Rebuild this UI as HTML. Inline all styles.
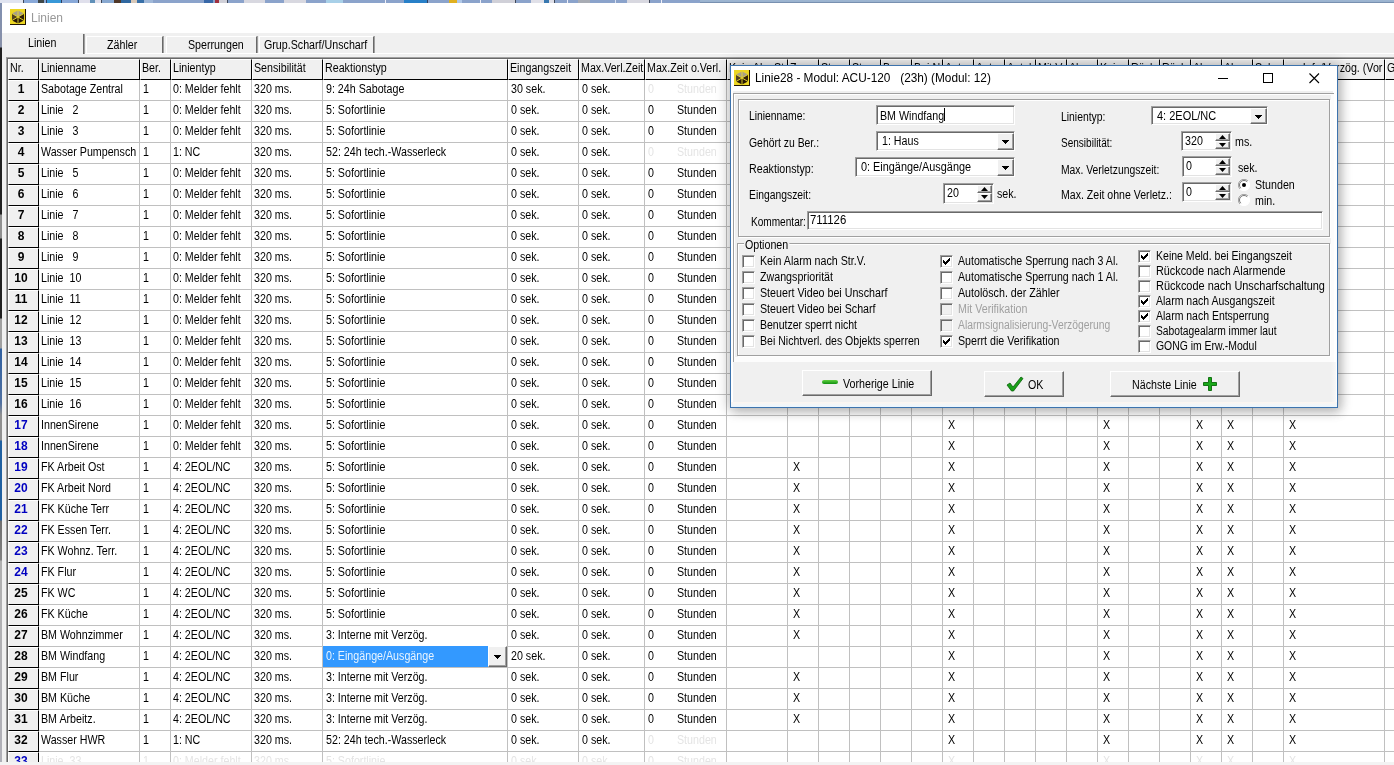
<!DOCTYPE html>
<html><head><meta charset="utf-8"><title>Linien</title>
<style>
*{box-sizing:border-box}
html,body{margin:0;padding:0}
body{width:1394px;height:765px;overflow:hidden;background:#fff;position:relative;font-family:"Liberation Sans",sans-serif;font-size:12px;color:#000}
.a{position:absolute;white-space:pre}
.t,.c,.l,.s{transform:scaleX(.89);transform-origin:0 50%}
.s{display:inline-block}
.t{position:absolute;white-space:pre;line-height:13px;height:13px}
#win{position:absolute;left:2px;top:3px;width:1392px;height:762px;background:#f0f0f0}
#title{position:absolute;left:0;top:0;width:1392px;height:30px;background:#fff}
#grid{position:absolute;left:7px;top:58px;width:1387px;height:707px;background:#fff;overflow:hidden}
.hc{position:absolute;top:1px;height:21px;background:#f0f0f0;border-right:1px solid #000;border-bottom:1px solid #000;border-left:1px solid #fff;border-top:1px solid #fff;overflow:hidden;white-space:pre;line-height:16px;padding-left:1px}
.nc{position:absolute;left:1px;width:31px;height:21px;background:#f0f0f0;border-right:1px solid #000;border-bottom:1px solid #000;border-left:1px solid #fff;border-top:1px solid #fff;text-align:center;font-weight:bold;font-size:12px;line-height:16px;padding-right:5px}
.nc.b{color:#0000c0}
.vl{position:absolute;width:1px;background:#c0c0c0;top:22px;bottom:0}
.hl{position:absolute;height:1px;background:#c0c0c0;left:32px;right:0}
.c{position:absolute;white-space:pre;line-height:13px;height:13px}
.g{color:#e4e4e4}
.x{position:absolute;width:9px;height:9px}
#root{position:absolute;left:0;top:0;width:1394px;height:765px;will-change:transform}

#dlg{position:absolute;left:730px;top:65px;width:608px;height:343px;background:#fff;border:1px solid #3d73ad;box-shadow:0 0 12px 2px rgba(0,0,0,.22), 3px 4px 10px rgba(0,0,0,.16)}
#dlg .l{position:absolute;white-space:pre;line-height:13px;height:13px}
#dlg .dis{color:#a0a0a0}
.sunk{position:absolute;background:#fff;border-top:1px solid #a0a0a0;border-left:1px solid #a0a0a0;border-right:1px solid #fff;border-bottom:1px solid #fff;box-shadow:inset 1px 1px 0 #696969, inset -1px -1px 0 #e3e3e3}
.btnr{position:absolute;background:#f0f0f0;border-top:1px solid #e3e3e3;border-left:1px solid #e3e3e3;border-right:1px solid #696969;border-bottom:1px solid #696969;box-shadow:inset 1px 1px 0 #fff, inset -1px -1px 0 #a0a0a0}
.bev{position:absolute;border:1px solid #a0a0a0;box-shadow:inset 1px 1px 0 #fff, 1px 1px 0 #fff}
.cb{position:absolute;width:13px;height:13px;background:#fff;border-top:1px solid #a0a0a0;border-left:1px solid #a0a0a0;border-right:1px solid #fff;border-bottom:1px solid #fff;box-shadow:inset 1px 1px 0 #696969, inset -1px -1px 0 #e3e3e3}
.cb.d{background:#f0f0f0}
.pb{position:absolute;background:#f0f0f0;border-top:1px solid #fff;border-left:1px solid #fff;border-right:1px solid #696969;border-bottom:1px solid #696969;box-shadow:inset -1px -1px 0 #a0a0a0}
</style></head><body><div id="root">

<div class="a" style="left:0;top:0;width:700px;height:3px;background:linear-gradient(90deg,#e0e4f0 0px,#e0e4f0 23px,#404858 23px,#404858 24px,#88a8d8 24px,#88a8d8 38px,#404848 38px,#404848 44px,#88a8d8 44px,#88a8d8 46px,#304060 46px,#304060 47px,#3898d8 47px,#3898d8 61px,#304060 61px,#304060 62px,#88a8d8 62px,#88a8d8 78px,#404858 78px,#404858 79px,#e0e0ec 79px,#e0e0ec 90px,#6090b8 90px,#6090b8 95px,#e0e0ec 95px,#e0e0ec 101px,#404858 101px,#404858 102px,#88a8d0 102px,#88a8d0 114px,#503828 114px,#503828 121px,#3068a0 121px,#3068a0 131px,#d8c8b8 131px,#d8c8b8 137px,#3870a8 137px,#3870a8 144px,#a0b8d8 144px,#a0b8d8 153px,#8ba3cb 153px,#8ba3cb 204px,#3868a8 204px,#3868a8 213px,#8ba3cb 213px,#8ba3cb 215px,#a03040 215px,#a03040 219px,#d0d0d8 219px,#d0d0d8 227px,#404858 227px,#404858 228px,#8ba3cb 228px,#8ba3cb 244px,#d8d8e0 244px,#d8d8e0 265px,#8ba3cb 265px,#8ba3cb 284px,#d8d8e0 284px,#d8d8e0 306px,#8ba3cb 306px,#8ba3cb 326px,#a8d0e8 326px,#a8d0e8 343px,#8ba3cb 343px,#8ba3cb 385px,#f0f0f8 385px,#f0f0f8 386px,#8ba3cb 386px,#8ba3cb 404px,#2880c8 404px,#2880c8 427px,#304060 427px,#304060 428px,#8ba3cb 428px,#8ba3cb 449px,#e0b020 449px,#e0b020 457px,#b0c8e8 457px,#b0c8e8 462px,#8ba3cb 462px,#8ba3cb 480px,#f0f0f8 480px,#f0f0f8 481px,#8ba3cb 481px,#8ba3cb 492px,#d0d0d8 492px,#d0d0d8 515px,#404858 515px,#404858 516px,#8ba3cb 516px,#8ba3cb 531px,#e0e0e8 531px,#e0e0e8 544px,#3878b0 544px,#3878b0 549px,#e0e0e8 549px,#e0e0e8 554px,#404858 554px,#404858 555px,#8ba3cb 555px,#8ba3cb 567px,#f0f0f8 567px,#f0f0f8 568px,#8ba3cb 568px,#8ba3cb 578px,#a8acb4 578px,#a8acb4 590px,#8ba3cb 590px,#8ba3cb 615px,#d8e0f0 615px,#d8e0f0 616px,#8ba3cb 616px,#8ba3cb 627px,#d8d8e0 627px,#d8d8e0 649px,#404858 649px,#404858 650px,#8ba3cb 650px,#8ba3cb 661px,#f0f0f8 661px,#f0f0f8 662px,#8ba3cb 662px,#8ba3cb 700px)"></div>
<div class="a" style="left:700px;top:0;width:694px;height:3px;background:linear-gradient(#9eb6d2,#9ab2ce 66%,#7890b0 67%)"></div>
<div class="a" style="left:0;top:3px;width:2px;height:762px;background:linear-gradient(#8090b0 0,#8890a8 44px,#202020 45px,#202020 211px,#909090 212px,#909090 235px,#202020 236px,#202020 315px,#a0a0a0 316px,#a0a0a0 345px,#3060a0 346px,#5070a0 400px,#909090 412px,#909090 437px,#2060a0 438px,#2060a0 517px,#707070 518px,#808080 557px,#b0b0b0 558px,#b0b0b8 100%)"></div>
<div id="win">
<div id="title"></div>
<svg class="a" style="left:8px;top:6px" width="16" height="16" viewBox="0 0 16 16"><rect x="0" y="0" width="16" height="16" fill="#ecd622"/><rect x="0" y="15" width="16" height="1" fill="#201400"/><rect x="15" y="0" width="1" height="16" fill="#201400"/><polygon points="8,1.5 14,4.5 8,8 2,4.5" fill="#a8a088"/><polygon points="2,4.5 8,8 2,11.5" fill="#504020"/><polygon points="14,4.5 8,8 14,11.5" fill="#302008"/><polygon points="2,11.5 8,8 8,14.5" fill="#281804"/><polygon points="14,11.5 8,8 8,14.5" fill="#281804"/><path d="M8 1v14M2 4.5L14 11.5M14 4.5L2 11.5" stroke="#e8d830" stroke-width=".9" fill="none"/></svg>
<div class="a" style="left:29px;top:7px;font-size:12px;color:#999;line-height:16px">Linien</div>
<div class="a" style="left:3px;top:50px;width:1389px;height:1px;background:#fff"></div>
<div class="a" style="left:4px;top:54px;width:1388px;height:1px;background:#a0a0a0"></div>
<div class="a" style="left:4px;top:54px;width:1px;height:708px;background:#a0a0a0"></div>
<div class="a" style="left:3px;top:31px;width:79px;height:20px;background:#f0f0f0;border-right:1px solid #696969;box-shadow:1px 0 0 #a0a0a0"></div>
<div class="t" style="left:26px;top:34px">Linien</div>
<div class="a" style="left:84px;top:33px;width:77px;height:17px;border-left:1px solid #fff;border-top:1px solid #fff;border-right:1px solid #696969;box-shadow:1px 0 0 #a0a0a0"></div>
<div class="t" style="left:105px;top:36px">Zähler</div>
<div class="a" style="left:164px;top:33px;width:91px;height:17px;border-left:1px solid #fff;border-top:1px solid #fff;border-right:1px solid #696969;box-shadow:1px 0 0 #a0a0a0"></div>
<div class="t" style="left:186px;top:36px">Sperrungen</div>
<div class="a" style="left:257px;top:33px;width:115px;height:17px;border-left:1px solid #fff;border-top:1px solid #fff;border-right:1px solid #696969;box-shadow:1px 0 0 #a0a0a0"></div>
<div class="t" style="left:262px;top:36px">Grup.Scharf/Unscharf</div>
</div>
<div id="grid">
<div class="a" style="left:0;top:0;right:0;height:1px;background:#696969"></div>
<div class="a" style="left:0;top:0;width:1px;bottom:0;background:#696969"></div>
<div class="hc" style="left:1px;width:31px"><span class="s">Nr.</span></div>
<div class="hc" style="left:32px;width:101px"><span class="s">Linienname</span></div>
<div class="hc" style="left:133px;width:31px"><span class="s">Ber.</span></div>
<div class="hc" style="left:164px;width:81px"><span class="s">Linientyp</span></div>
<div class="hc" style="left:245px;width:71px"><span class="s">Sensibilität</span></div>
<div class="hc" style="left:316px;width:185px"><span class="s">Reaktionstyp</span></div>
<div class="hc" style="left:501px;width:71px"><span class="s">Eingangszeit</span></div>
<div class="hc" style="left:572px;width:66px"><span class="s">Max.Verl.Zeit</span></div>
<div class="hc" style="left:638px;width:82px"><span class="s">Max.Zeit o.Verl.</span></div>
<div class="hc" style="left:720px;width:61px"><span class="s">Kein Al.n.Str.V</span></div>
<div class="hc" style="left:781px;width:31px"><span class="s">Zw.</span></div>
<div class="hc" style="left:812px;width:31px"><span class="s">St.</span></div>
<div class="hc" style="left:843px;width:31px"><span class="s">St.</span></div>
<div class="hc" style="left:874px;width:31px"><span class="s">Ben.</span></div>
<div class="hc" style="left:905px;width:31px"><span class="s">Bei N</span></div>
<div class="hc" style="left:936px;width:31px"><span class="s">Aut.</span></div>
<div class="hc" style="left:967px;width:31px"><span class="s">Aut.</span></div>
<div class="hc" style="left:998px;width:31px"><span class="s">Autol</span></div>
<div class="hc" style="left:1029px;width:31px"><span class="s">Mit V</span></div>
<div class="hc" style="left:1060px;width:31px"><span class="s">Al.s</span></div>
<div class="hc" style="left:1091px;width:31px"><span class="s">Kein</span></div>
<div class="hc" style="left:1122px;width:31px"><span class="s">Rück</span></div>
<div class="hc" style="left:1153px;width:31px"><span class="s">Rück</span></div>
<div class="hc" style="left:1184px;width:31px"><span class="s">Al.n.</span></div>
<div class="hc" style="left:1215px;width:31px"><span class="s">Al.n.</span></div>
<div class="hc" style="left:1246px;width:31px"><span class="s">Sab.</span></div>
<div class="hc" style="left:1277px;width:101px;text-align:right;padding-right:2px"><span class="s" style="transform-origin:100% 50%">Info/Verzög. (Vor</span></div>
<div class="hc" style="left:1378px;width:56px"><span class="s">G</span></div>
<div class="vl" style="left:132px"></div>
<div class="vl" style="left:163px"></div>
<div class="vl" style="left:244px"></div>
<div class="vl" style="left:315px"></div>
<div class="vl" style="left:500px"></div>
<div class="vl" style="left:571px"></div>
<div class="vl" style="left:637px"></div>
<div class="vl" style="left:719px"></div>
<div class="vl" style="left:780px"></div>
<div class="vl" style="left:811px"></div>
<div class="vl" style="left:842px"></div>
<div class="vl" style="left:873px"></div>
<div class="vl" style="left:904px"></div>
<div class="vl" style="left:935px"></div>
<div class="vl" style="left:966px"></div>
<div class="vl" style="left:997px"></div>
<div class="vl" style="left:1028px"></div>
<div class="vl" style="left:1059px"></div>
<div class="vl" style="left:1090px"></div>
<div class="vl" style="left:1121px"></div>
<div class="vl" style="left:1152px"></div>
<div class="vl" style="left:1183px"></div>
<div class="vl" style="left:1214px"></div>
<div class="vl" style="left:1245px"></div>
<div class="vl" style="left:1276px"></div>
<div class="vl" style="left:1377px"></div>
<div class="vl" style="left:1433px"></div>
<div class="nc" style="top:22px">1</div>
<div class="hl" style="top:42px"></div>
<div class="c" style="left:34px;top:25px">Sabotage Zentral</div>
<div class="c" style="left:135.5px;top:25px">1</div>
<div class="c" style="left:166px;top:25px">0: Melder fehlt</div>
<div class="c" style="left:247px;top:25px">320 ms.</div>
<div class="c" style="left:318.5px;top:25px">9: 24h Sabotage</div>
<div class="c" style="left:503.5px;top:25px">30 sek.</div>
<div class="c" style="left:574.5px;top:25px">0 sek.</div>
<div class="c g" style="left:640.5px;top:25px">0</div>
<div class="c g" style="left:670px;top:25px">Stunden</div>
<div class="nc" style="top:43px">2</div>
<div class="hl" style="top:63px"></div>
<div class="c" style="left:34px;top:46px">Linie   2</div>
<div class="c" style="left:135.5px;top:46px">1</div>
<div class="c" style="left:166px;top:46px">0: Melder fehlt</div>
<div class="c" style="left:247px;top:46px">320 ms.</div>
<div class="c" style="left:318.5px;top:46px">5: Sofortlinie</div>
<div class="c" style="left:503.5px;top:46px">0 sek.</div>
<div class="c" style="left:574.5px;top:46px">0 sek.</div>
<div class="c" style="left:640.5px;top:46px">0</div>
<div class="c" style="left:670px;top:46px">Stunden</div>
<div class="nc" style="top:64px">3</div>
<div class="hl" style="top:84px"></div>
<div class="c" style="left:34px;top:67px">Linie   3</div>
<div class="c" style="left:135.5px;top:67px">1</div>
<div class="c" style="left:166px;top:67px">0: Melder fehlt</div>
<div class="c" style="left:247px;top:67px">320 ms.</div>
<div class="c" style="left:318.5px;top:67px">5: Sofortlinie</div>
<div class="c" style="left:503.5px;top:67px">0 sek.</div>
<div class="c" style="left:574.5px;top:67px">0 sek.</div>
<div class="c" style="left:640.5px;top:67px">0</div>
<div class="c" style="left:670px;top:67px">Stunden</div>
<div class="nc" style="top:85px">4</div>
<div class="hl" style="top:105px"></div>
<div class="c" style="left:34px;top:88px">Wasser Pumpensch</div>
<div class="c" style="left:135.5px;top:88px">1</div>
<div class="c" style="left:166px;top:88px">1: NC</div>
<div class="c" style="left:247px;top:88px">320 ms.</div>
<div class="c" style="left:318.5px;top:88px">52: 24h tech.-Wasserleck</div>
<div class="c" style="left:503.5px;top:88px">0 sek.</div>
<div class="c" style="left:574.5px;top:88px">0 sek.</div>
<div class="c g" style="left:640.5px;top:88px">0</div>
<div class="c g" style="left:670px;top:88px">Stunden</div>
<div class="nc" style="top:106px">5</div>
<div class="hl" style="top:126px"></div>
<div class="c" style="left:34px;top:109px">Linie   5</div>
<div class="c" style="left:135.5px;top:109px">1</div>
<div class="c" style="left:166px;top:109px">0: Melder fehlt</div>
<div class="c" style="left:247px;top:109px">320 ms.</div>
<div class="c" style="left:318.5px;top:109px">5: Sofortlinie</div>
<div class="c" style="left:503.5px;top:109px">0 sek.</div>
<div class="c" style="left:574.5px;top:109px">0 sek.</div>
<div class="c" style="left:640.5px;top:109px">0</div>
<div class="c" style="left:670px;top:109px">Stunden</div>
<div class="nc" style="top:127px">6</div>
<div class="hl" style="top:147px"></div>
<div class="c" style="left:34px;top:130px">Linie   6</div>
<div class="c" style="left:135.5px;top:130px">1</div>
<div class="c" style="left:166px;top:130px">0: Melder fehlt</div>
<div class="c" style="left:247px;top:130px">320 ms.</div>
<div class="c" style="left:318.5px;top:130px">5: Sofortlinie</div>
<div class="c" style="left:503.5px;top:130px">0 sek.</div>
<div class="c" style="left:574.5px;top:130px">0 sek.</div>
<div class="c" style="left:640.5px;top:130px">0</div>
<div class="c" style="left:670px;top:130px">Stunden</div>
<div class="nc" style="top:148px">7</div>
<div class="hl" style="top:168px"></div>
<div class="c" style="left:34px;top:151px">Linie   7</div>
<div class="c" style="left:135.5px;top:151px">1</div>
<div class="c" style="left:166px;top:151px">0: Melder fehlt</div>
<div class="c" style="left:247px;top:151px">320 ms.</div>
<div class="c" style="left:318.5px;top:151px">5: Sofortlinie</div>
<div class="c" style="left:503.5px;top:151px">0 sek.</div>
<div class="c" style="left:574.5px;top:151px">0 sek.</div>
<div class="c" style="left:640.5px;top:151px">0</div>
<div class="c" style="left:670px;top:151px">Stunden</div>
<div class="nc" style="top:169px">8</div>
<div class="hl" style="top:189px"></div>
<div class="c" style="left:34px;top:172px">Linie   8</div>
<div class="c" style="left:135.5px;top:172px">1</div>
<div class="c" style="left:166px;top:172px">0: Melder fehlt</div>
<div class="c" style="left:247px;top:172px">320 ms.</div>
<div class="c" style="left:318.5px;top:172px">5: Sofortlinie</div>
<div class="c" style="left:503.5px;top:172px">0 sek.</div>
<div class="c" style="left:574.5px;top:172px">0 sek.</div>
<div class="c" style="left:640.5px;top:172px">0</div>
<div class="c" style="left:670px;top:172px">Stunden</div>
<div class="nc" style="top:190px">9</div>
<div class="hl" style="top:210px"></div>
<div class="c" style="left:34px;top:193px">Linie   9</div>
<div class="c" style="left:135.5px;top:193px">1</div>
<div class="c" style="left:166px;top:193px">0: Melder fehlt</div>
<div class="c" style="left:247px;top:193px">320 ms.</div>
<div class="c" style="left:318.5px;top:193px">5: Sofortlinie</div>
<div class="c" style="left:503.5px;top:193px">0 sek.</div>
<div class="c" style="left:574.5px;top:193px">0 sek.</div>
<div class="c" style="left:640.5px;top:193px">0</div>
<div class="c" style="left:670px;top:193px">Stunden</div>
<div class="nc" style="top:211px">10</div>
<div class="hl" style="top:231px"></div>
<div class="c" style="left:34px;top:214px">Linie  10</div>
<div class="c" style="left:135.5px;top:214px">1</div>
<div class="c" style="left:166px;top:214px">0: Melder fehlt</div>
<div class="c" style="left:247px;top:214px">320 ms.</div>
<div class="c" style="left:318.5px;top:214px">5: Sofortlinie</div>
<div class="c" style="left:503.5px;top:214px">0 sek.</div>
<div class="c" style="left:574.5px;top:214px">0 sek.</div>
<div class="c" style="left:640.5px;top:214px">0</div>
<div class="c" style="left:670px;top:214px">Stunden</div>
<div class="nc" style="top:232px">11</div>
<div class="hl" style="top:252px"></div>
<div class="c" style="left:34px;top:235px">Linie  11</div>
<div class="c" style="left:135.5px;top:235px">1</div>
<div class="c" style="left:166px;top:235px">0: Melder fehlt</div>
<div class="c" style="left:247px;top:235px">320 ms.</div>
<div class="c" style="left:318.5px;top:235px">5: Sofortlinie</div>
<div class="c" style="left:503.5px;top:235px">0 sek.</div>
<div class="c" style="left:574.5px;top:235px">0 sek.</div>
<div class="c" style="left:640.5px;top:235px">0</div>
<div class="c" style="left:670px;top:235px">Stunden</div>
<div class="nc" style="top:253px">12</div>
<div class="hl" style="top:273px"></div>
<div class="c" style="left:34px;top:256px">Linie  12</div>
<div class="c" style="left:135.5px;top:256px">1</div>
<div class="c" style="left:166px;top:256px">0: Melder fehlt</div>
<div class="c" style="left:247px;top:256px">320 ms.</div>
<div class="c" style="left:318.5px;top:256px">5: Sofortlinie</div>
<div class="c" style="left:503.5px;top:256px">0 sek.</div>
<div class="c" style="left:574.5px;top:256px">0 sek.</div>
<div class="c" style="left:640.5px;top:256px">0</div>
<div class="c" style="left:670px;top:256px">Stunden</div>
<div class="nc" style="top:274px">13</div>
<div class="hl" style="top:294px"></div>
<div class="c" style="left:34px;top:277px">Linie  13</div>
<div class="c" style="left:135.5px;top:277px">1</div>
<div class="c" style="left:166px;top:277px">0: Melder fehlt</div>
<div class="c" style="left:247px;top:277px">320 ms.</div>
<div class="c" style="left:318.5px;top:277px">5: Sofortlinie</div>
<div class="c" style="left:503.5px;top:277px">0 sek.</div>
<div class="c" style="left:574.5px;top:277px">0 sek.</div>
<div class="c" style="left:640.5px;top:277px">0</div>
<div class="c" style="left:670px;top:277px">Stunden</div>
<div class="nc" style="top:295px">14</div>
<div class="hl" style="top:315px"></div>
<div class="c" style="left:34px;top:298px">Linie  14</div>
<div class="c" style="left:135.5px;top:298px">1</div>
<div class="c" style="left:166px;top:298px">0: Melder fehlt</div>
<div class="c" style="left:247px;top:298px">320 ms.</div>
<div class="c" style="left:318.5px;top:298px">5: Sofortlinie</div>
<div class="c" style="left:503.5px;top:298px">0 sek.</div>
<div class="c" style="left:574.5px;top:298px">0 sek.</div>
<div class="c" style="left:640.5px;top:298px">0</div>
<div class="c" style="left:670px;top:298px">Stunden</div>
<div class="nc" style="top:316px">15</div>
<div class="hl" style="top:336px"></div>
<div class="c" style="left:34px;top:319px">Linie  15</div>
<div class="c" style="left:135.5px;top:319px">1</div>
<div class="c" style="left:166px;top:319px">0: Melder fehlt</div>
<div class="c" style="left:247px;top:319px">320 ms.</div>
<div class="c" style="left:318.5px;top:319px">5: Sofortlinie</div>
<div class="c" style="left:503.5px;top:319px">0 sek.</div>
<div class="c" style="left:574.5px;top:319px">0 sek.</div>
<div class="c" style="left:640.5px;top:319px">0</div>
<div class="c" style="left:670px;top:319px">Stunden</div>
<div class="nc" style="top:337px">16</div>
<div class="hl" style="top:357px"></div>
<div class="c" style="left:34px;top:340px">Linie  16</div>
<div class="c" style="left:135.5px;top:340px">1</div>
<div class="c" style="left:166px;top:340px">0: Melder fehlt</div>
<div class="c" style="left:247px;top:340px">320 ms.</div>
<div class="c" style="left:318.5px;top:340px">5: Sofortlinie</div>
<div class="c" style="left:503.5px;top:340px">0 sek.</div>
<div class="c" style="left:574.5px;top:340px">0 sek.</div>
<div class="c" style="left:640.5px;top:340px">0</div>
<div class="c" style="left:670px;top:340px">Stunden</div>
<div class="nc b" style="top:358px">17</div>
<div class="hl" style="top:378px"></div>
<div class="c" style="left:34px;top:361px">InnenSirene</div>
<div class="c" style="left:135.5px;top:361px">1</div>
<div class="c" style="left:166px;top:361px">0: Melder fehlt</div>
<div class="c" style="left:247px;top:361px">320 ms.</div>
<div class="c" style="left:318.5px;top:361px">5: Sofortlinie</div>
<div class="c" style="left:503.5px;top:361px">0 sek.</div>
<div class="c" style="left:574.5px;top:361px">0 sek.</div>
<div class="c" style="left:640.5px;top:361px">0</div>
<div class="c" style="left:670px;top:361px">Stunden</div>
<div class="c" style="left:940.5px;top:361px">X</div>
<div class="c" style="left:1095.5px;top:361px">X</div>
<div class="c" style="left:1188.5px;top:361px">X</div>
<div class="c" style="left:1219.5px;top:361px">X</div>
<div class="c" style="left:1281.5px;top:361px">X</div>
<div class="nc b" style="top:379px">18</div>
<div class="hl" style="top:399px"></div>
<div class="c" style="left:34px;top:382px">InnenSirene</div>
<div class="c" style="left:135.5px;top:382px">1</div>
<div class="c" style="left:166px;top:382px">0: Melder fehlt</div>
<div class="c" style="left:247px;top:382px">320 ms.</div>
<div class="c" style="left:318.5px;top:382px">5: Sofortlinie</div>
<div class="c" style="left:503.5px;top:382px">0 sek.</div>
<div class="c" style="left:574.5px;top:382px">0 sek.</div>
<div class="c" style="left:640.5px;top:382px">0</div>
<div class="c" style="left:670px;top:382px">Stunden</div>
<div class="c" style="left:940.5px;top:382px">X</div>
<div class="c" style="left:1095.5px;top:382px">X</div>
<div class="c" style="left:1188.5px;top:382px">X</div>
<div class="c" style="left:1219.5px;top:382px">X</div>
<div class="c" style="left:1281.5px;top:382px">X</div>
<div class="nc b" style="top:400px">19</div>
<div class="hl" style="top:420px"></div>
<div class="c" style="left:34px;top:403px">FK Arbeit Ost</div>
<div class="c" style="left:135.5px;top:403px">1</div>
<div class="c" style="left:166px;top:403px">4: 2EOL/NC</div>
<div class="c" style="left:247px;top:403px">320 ms.</div>
<div class="c" style="left:318.5px;top:403px">5: Sofortlinie</div>
<div class="c" style="left:503.5px;top:403px">0 sek.</div>
<div class="c" style="left:574.5px;top:403px">0 sek.</div>
<div class="c" style="left:640.5px;top:403px">0</div>
<div class="c" style="left:670px;top:403px">Stunden</div>
<div class="c" style="left:785.5px;top:403px">X</div>
<div class="c" style="left:940.5px;top:403px">X</div>
<div class="c" style="left:1095.5px;top:403px">X</div>
<div class="c" style="left:1188.5px;top:403px">X</div>
<div class="c" style="left:1219.5px;top:403px">X</div>
<div class="c" style="left:1281.5px;top:403px">X</div>
<div class="nc b" style="top:421px">20</div>
<div class="hl" style="top:441px"></div>
<div class="c" style="left:34px;top:424px">FK Arbeit Nord</div>
<div class="c" style="left:135.5px;top:424px">1</div>
<div class="c" style="left:166px;top:424px">4: 2EOL/NC</div>
<div class="c" style="left:247px;top:424px">320 ms.</div>
<div class="c" style="left:318.5px;top:424px">5: Sofortlinie</div>
<div class="c" style="left:503.5px;top:424px">0 sek.</div>
<div class="c" style="left:574.5px;top:424px">0 sek.</div>
<div class="c" style="left:640.5px;top:424px">0</div>
<div class="c" style="left:670px;top:424px">Stunden</div>
<div class="c" style="left:785.5px;top:424px">X</div>
<div class="c" style="left:940.5px;top:424px">X</div>
<div class="c" style="left:1095.5px;top:424px">X</div>
<div class="c" style="left:1188.5px;top:424px">X</div>
<div class="c" style="left:1219.5px;top:424px">X</div>
<div class="c" style="left:1281.5px;top:424px">X</div>
<div class="nc b" style="top:442px">21</div>
<div class="hl" style="top:462px"></div>
<div class="c" style="left:34px;top:445px">FK Küche Terr</div>
<div class="c" style="left:135.5px;top:445px">1</div>
<div class="c" style="left:166px;top:445px">4: 2EOL/NC</div>
<div class="c" style="left:247px;top:445px">320 ms.</div>
<div class="c" style="left:318.5px;top:445px">5: Sofortlinie</div>
<div class="c" style="left:503.5px;top:445px">0 sek.</div>
<div class="c" style="left:574.5px;top:445px">0 sek.</div>
<div class="c" style="left:640.5px;top:445px">0</div>
<div class="c" style="left:670px;top:445px">Stunden</div>
<div class="c" style="left:785.5px;top:445px">X</div>
<div class="c" style="left:940.5px;top:445px">X</div>
<div class="c" style="left:1095.5px;top:445px">X</div>
<div class="c" style="left:1188.5px;top:445px">X</div>
<div class="c" style="left:1219.5px;top:445px">X</div>
<div class="c" style="left:1281.5px;top:445px">X</div>
<div class="nc b" style="top:463px">22</div>
<div class="hl" style="top:483px"></div>
<div class="c" style="left:34px;top:466px">FK Essen Terr.</div>
<div class="c" style="left:135.5px;top:466px">1</div>
<div class="c" style="left:166px;top:466px">4: 2EOL/NC</div>
<div class="c" style="left:247px;top:466px">320 ms.</div>
<div class="c" style="left:318.5px;top:466px">5: Sofortlinie</div>
<div class="c" style="left:503.5px;top:466px">0 sek.</div>
<div class="c" style="left:574.5px;top:466px">0 sek.</div>
<div class="c" style="left:640.5px;top:466px">0</div>
<div class="c" style="left:670px;top:466px">Stunden</div>
<div class="c" style="left:785.5px;top:466px">X</div>
<div class="c" style="left:940.5px;top:466px">X</div>
<div class="c" style="left:1095.5px;top:466px">X</div>
<div class="c" style="left:1188.5px;top:466px">X</div>
<div class="c" style="left:1219.5px;top:466px">X</div>
<div class="c" style="left:1281.5px;top:466px">X</div>
<div class="nc b" style="top:484px">23</div>
<div class="hl" style="top:504px"></div>
<div class="c" style="left:34px;top:487px">FK Wohnz. Terr.</div>
<div class="c" style="left:135.5px;top:487px">1</div>
<div class="c" style="left:166px;top:487px">4: 2EOL/NC</div>
<div class="c" style="left:247px;top:487px">320 ms.</div>
<div class="c" style="left:318.5px;top:487px">5: Sofortlinie</div>
<div class="c" style="left:503.5px;top:487px">0 sek.</div>
<div class="c" style="left:574.5px;top:487px">0 sek.</div>
<div class="c" style="left:640.5px;top:487px">0</div>
<div class="c" style="left:670px;top:487px">Stunden</div>
<div class="c" style="left:785.5px;top:487px">X</div>
<div class="c" style="left:940.5px;top:487px">X</div>
<div class="c" style="left:1095.5px;top:487px">X</div>
<div class="c" style="left:1188.5px;top:487px">X</div>
<div class="c" style="left:1219.5px;top:487px">X</div>
<div class="c" style="left:1281.5px;top:487px">X</div>
<div class="nc b" style="top:505px">24</div>
<div class="hl" style="top:525px"></div>
<div class="c" style="left:34px;top:508px">FK Flur</div>
<div class="c" style="left:135.5px;top:508px">1</div>
<div class="c" style="left:166px;top:508px">4: 2EOL/NC</div>
<div class="c" style="left:247px;top:508px">320 ms.</div>
<div class="c" style="left:318.5px;top:508px">5: Sofortlinie</div>
<div class="c" style="left:503.5px;top:508px">0 sek.</div>
<div class="c" style="left:574.5px;top:508px">0 sek.</div>
<div class="c" style="left:640.5px;top:508px">0</div>
<div class="c" style="left:670px;top:508px">Stunden</div>
<div class="c" style="left:785.5px;top:508px">X</div>
<div class="c" style="left:940.5px;top:508px">X</div>
<div class="c" style="left:1095.5px;top:508px">X</div>
<div class="c" style="left:1188.5px;top:508px">X</div>
<div class="c" style="left:1219.5px;top:508px">X</div>
<div class="c" style="left:1281.5px;top:508px">X</div>
<div class="nc" style="top:526px">25</div>
<div class="hl" style="top:546px"></div>
<div class="c" style="left:34px;top:529px">FK WC</div>
<div class="c" style="left:135.5px;top:529px">1</div>
<div class="c" style="left:166px;top:529px">4: 2EOL/NC</div>
<div class="c" style="left:247px;top:529px">320 ms.</div>
<div class="c" style="left:318.5px;top:529px">5: Sofortlinie</div>
<div class="c" style="left:503.5px;top:529px">0 sek.</div>
<div class="c" style="left:574.5px;top:529px">0 sek.</div>
<div class="c" style="left:640.5px;top:529px">0</div>
<div class="c" style="left:670px;top:529px">Stunden</div>
<div class="c" style="left:785.5px;top:529px">X</div>
<div class="c" style="left:940.5px;top:529px">X</div>
<div class="c" style="left:1095.5px;top:529px">X</div>
<div class="c" style="left:1188.5px;top:529px">X</div>
<div class="c" style="left:1219.5px;top:529px">X</div>
<div class="c" style="left:1281.5px;top:529px">X</div>
<div class="nc" style="top:547px">26</div>
<div class="hl" style="top:567px"></div>
<div class="c" style="left:34px;top:550px">FK Küche</div>
<div class="c" style="left:135.5px;top:550px">1</div>
<div class="c" style="left:166px;top:550px">4: 2EOL/NC</div>
<div class="c" style="left:247px;top:550px">320 ms.</div>
<div class="c" style="left:318.5px;top:550px">5: Sofortlinie</div>
<div class="c" style="left:503.5px;top:550px">0 sek.</div>
<div class="c" style="left:574.5px;top:550px">0 sek.</div>
<div class="c" style="left:640.5px;top:550px">0</div>
<div class="c" style="left:670px;top:550px">Stunden</div>
<div class="c" style="left:785.5px;top:550px">X</div>
<div class="c" style="left:940.5px;top:550px">X</div>
<div class="c" style="left:1095.5px;top:550px">X</div>
<div class="c" style="left:1188.5px;top:550px">X</div>
<div class="c" style="left:1219.5px;top:550px">X</div>
<div class="c" style="left:1281.5px;top:550px">X</div>
<div class="nc" style="top:568px">27</div>
<div class="hl" style="top:588px"></div>
<div class="c" style="left:34px;top:571px">BM Wohnzimmer</div>
<div class="c" style="left:135.5px;top:571px">1</div>
<div class="c" style="left:166px;top:571px">4: 2EOL/NC</div>
<div class="c" style="left:247px;top:571px">320 ms.</div>
<div class="c" style="left:318.5px;top:571px">3: Interne mit Verzög.</div>
<div class="c" style="left:503.5px;top:571px">0 sek.</div>
<div class="c" style="left:574.5px;top:571px">0 sek.</div>
<div class="c" style="left:640.5px;top:571px">0</div>
<div class="c" style="left:670px;top:571px">Stunden</div>
<div class="c" style="left:785.5px;top:571px">X</div>
<div class="c" style="left:940.5px;top:571px">X</div>
<div class="c" style="left:1095.5px;top:571px">X</div>
<div class="c" style="left:1188.5px;top:571px">X</div>
<div class="c" style="left:1219.5px;top:571px">X</div>
<div class="c" style="left:1281.5px;top:571px">X</div>
<div class="nc" style="top:589px">28</div>
<div class="hl" style="top:609px"></div>
<div class="c" style="left:34px;top:592px">BM Windfang</div>
<div class="c" style="left:135.5px;top:592px">1</div>
<div class="c" style="left:166px;top:592px">4: 2EOL/NC</div>
<div class="c" style="left:247px;top:592px">320 ms.</div>
<div class="a" style="left:316px;top:588px;width:165px;height:21px;background:#3399ff"></div>
<div class="c" style="left:318.5px;top:592px;color:#e8f4ff">0: Eingänge/Ausgänge</div>
<div class="a" style="left:481px;top:588px;width:19px;height:21px;background:#f0f0f0;border-top:1px solid #fff;border-left:1px solid #fff;border-right:1px solid #696969;border-bottom:1px solid #696969;box-shadow:inset -1px -1px 0 #a0a0a0"></div>
<svg class="a" style="left:487px;top:597px" width="7" height="4" viewBox="0 0 7 4"><path shape-rendering="crispEdges" d="M0 0h7v1h-1v1h-1v1h-1v1h-1v-1h-1v-1h-1v-1h-1z" fill="#000"/></svg>
<div class="c" style="left:503.5px;top:592px">20 sek.</div>
<div class="c" style="left:574.5px;top:592px">0 sek.</div>
<div class="c" style="left:640.5px;top:592px">0</div>
<div class="c" style="left:670px;top:592px">Stunden</div>
<div class="c" style="left:940.5px;top:592px">X</div>
<div class="c" style="left:1095.5px;top:592px">X</div>
<div class="c" style="left:1188.5px;top:592px">X</div>
<div class="c" style="left:1219.5px;top:592px">X</div>
<div class="c" style="left:1281.5px;top:592px">X</div>
<div class="nc" style="top:610px">29</div>
<div class="hl" style="top:630px"></div>
<div class="c" style="left:34px;top:613px">BM Flur</div>
<div class="c" style="left:135.5px;top:613px">1</div>
<div class="c" style="left:166px;top:613px">4: 2EOL/NC</div>
<div class="c" style="left:247px;top:613px">320 ms.</div>
<div class="c" style="left:318.5px;top:613px">3: Interne mit Verzög.</div>
<div class="c" style="left:503.5px;top:613px">0 sek.</div>
<div class="c" style="left:574.5px;top:613px">0 sek.</div>
<div class="c" style="left:640.5px;top:613px">0</div>
<div class="c" style="left:670px;top:613px">Stunden</div>
<div class="c" style="left:785.5px;top:613px">X</div>
<div class="c" style="left:940.5px;top:613px">X</div>
<div class="c" style="left:1095.5px;top:613px">X</div>
<div class="c" style="left:1188.5px;top:613px">X</div>
<div class="c" style="left:1219.5px;top:613px">X</div>
<div class="c" style="left:1281.5px;top:613px">X</div>
<div class="nc" style="top:631px">30</div>
<div class="hl" style="top:651px"></div>
<div class="c" style="left:34px;top:634px">BM Küche</div>
<div class="c" style="left:135.5px;top:634px">1</div>
<div class="c" style="left:166px;top:634px">4: 2EOL/NC</div>
<div class="c" style="left:247px;top:634px">320 ms.</div>
<div class="c" style="left:318.5px;top:634px">3: Interne mit Verzög.</div>
<div class="c" style="left:503.5px;top:634px">0 sek.</div>
<div class="c" style="left:574.5px;top:634px">0 sek.</div>
<div class="c" style="left:640.5px;top:634px">0</div>
<div class="c" style="left:670px;top:634px">Stunden</div>
<div class="c" style="left:785.5px;top:634px">X</div>
<div class="c" style="left:940.5px;top:634px">X</div>
<div class="c" style="left:1095.5px;top:634px">X</div>
<div class="c" style="left:1188.5px;top:634px">X</div>
<div class="c" style="left:1219.5px;top:634px">X</div>
<div class="c" style="left:1281.5px;top:634px">X</div>
<div class="nc" style="top:652px">31</div>
<div class="hl" style="top:672px"></div>
<div class="c" style="left:34px;top:655px">BM Arbeitz.</div>
<div class="c" style="left:135.5px;top:655px">1</div>
<div class="c" style="left:166px;top:655px">4: 2EOL/NC</div>
<div class="c" style="left:247px;top:655px">320 ms.</div>
<div class="c" style="left:318.5px;top:655px">3: Interne mit Verzög.</div>
<div class="c" style="left:503.5px;top:655px">0 sek.</div>
<div class="c" style="left:574.5px;top:655px">0 sek.</div>
<div class="c" style="left:640.5px;top:655px">0</div>
<div class="c" style="left:670px;top:655px">Stunden</div>
<div class="c" style="left:785.5px;top:655px">X</div>
<div class="c" style="left:940.5px;top:655px">X</div>
<div class="c" style="left:1095.5px;top:655px">X</div>
<div class="c" style="left:1188.5px;top:655px">X</div>
<div class="c" style="left:1219.5px;top:655px">X</div>
<div class="c" style="left:1281.5px;top:655px">X</div>
<div class="nc" style="top:673px">32</div>
<div class="hl" style="top:693px"></div>
<div class="c" style="left:34px;top:676px">Wasser HWR</div>
<div class="c" style="left:135.5px;top:676px">1</div>
<div class="c" style="left:166px;top:676px">1: NC</div>
<div class="c" style="left:247px;top:676px">320 ms.</div>
<div class="c" style="left:318.5px;top:676px">52: 24h tech.-Wasserleck</div>
<div class="c" style="left:503.5px;top:676px">0 sek.</div>
<div class="c" style="left:574.5px;top:676px">0 sek.</div>
<div class="c g" style="left:640.5px;top:676px">0</div>
<div class="c g" style="left:670px;top:676px">Stunden</div>
<div class="c" style="left:940.5px;top:676px">X</div>
<div class="c" style="left:1095.5px;top:676px">X</div>
<div class="c" style="left:1188.5px;top:676px">X</div>
<div class="c" style="left:1219.5px;top:676px">X</div>
<div class="c" style="left:1281.5px;top:676px">X</div>
<div class="nc b" style="top:694px">33</div>
<div class="hl" style="top:714px"></div>
<div class="c g" style="left:34px;top:697px">Linie  33</div>
<div class="c g" style="left:135.5px;top:697px">1</div>
<div class="c g" style="left:166px;top:697px">0: Melder fehlt</div>
<div class="c g" style="left:247px;top:697px">320 ms.</div>
<div class="c g" style="left:318.5px;top:697px">5: Sofortlinie</div>
<div class="c g" style="left:503.5px;top:697px">0 sek.</div>
<div class="c g" style="left:574.5px;top:697px">0 sek.</div>
<div class="c g" style="left:640.5px;top:697px">0</div>
<div class="c g" style="left:670px;top:697px">Stunden</div>
<div class="c g" style="left:940.5px;top:697px">X</div>
<div class="c g" style="left:1095.5px;top:697px">X</div>
<div class="c g" style="left:1188.5px;top:697px">X</div>
<div class="c g" style="left:1219.5px;top:697px">X</div>
<div class="c g" style="left:1281.5px;top:697px">X</div>
</div>
<div class="a" style="left:0;top:762px;width:1394px;height:3px;background:#f3f3f3"></div>

<div id="dlg">
<div class="a" style="left:2px;top:25px;width:600px;height:311px;background:#f0f0f0"></div>
<div class="a" style="left:2px;top:27px;width:601px;height:1px;background:#a0a0a0"></div>
<div class="a" style="left:2px;top:27px;width:1px;height:269px;background:#a0a0a0"></div>
<div class="a" style="left:3px;top:28px;width:598px;height:1px;background:#fff"></div>
<div class="a" style="left:3px;top:28px;width:1px;height:264px;background:#fff"></div>
<div class="a" style="left:3px;top:291px;width:600px;height:5px;background:#fcfcfc"></div>
<div class="a" style="left:600px;top:28px;width:3px;height:264px;background:#fcfcfc"></div>
<div class="a" style="left:2px;top:296px;width:603px;height:40px;background:linear-gradient(90deg,#f0f0f0 598px,#f8f8f8)"></div>
<div class="a" style="left:0;top:336px;width:606px;height:5px;background:linear-gradient(#fdf6f0,#eaf6ff)"></div>
<svg class="a" style="left:3px;top:4px" width="16" height="16" viewBox="0 0 16 16"><rect x="0" y="0" width="16" height="16" fill="#ecd622"/><rect x="0" y="15" width="16" height="1" fill="#201400"/><rect x="15" y="0" width="1" height="16" fill="#201400"/><polygon points="8,1.5 14,4.5 8,8 2,4.5" fill="#a8a088"/><polygon points="2,4.5 8,8 2,11.5" fill="#504020"/><polygon points="14,4.5 8,8 14,11.5" fill="#302008"/><polygon points="2,11.5 8,8 8,14.5" fill="#281804"/><polygon points="14,11.5 8,8 8,14.5" fill="#281804"/><path d="M8 1v14M2 4.5L14 11.5M14 4.5L2 11.5" stroke="#e8d830" stroke-width=".9" fill="none"/></svg>
<div class="a" style="left:24px;top:4px;font-size:12px;line-height:16px;transform:scaleX(.985);transform-origin:0 0">Linie28 - Modul: ACU-120   (23h) (Modul: 12)</div>
<div class="a" style="left:487px;top:12px;width:10px;height:1px;background:#000"></div>
<div class="a" style="left:532px;top:7px;width:10px;height:10px;border:1px solid #000"></div>
<svg class="a" style="left:578px;top:7px" width="11" height="11" viewBox="0 0 11 11"><path d="M0.5 0.5L10 10M10 0.5L0.5 10" stroke="#000" stroke-width="1.1" fill="none"/></svg>
<div class="bev" style="left:7px;top:33px;width:592px;height:138px"></div>
<div class="l" style="left:18px;top:44px;transform:scaleX(0.862)">Linienname:</div>
<div class="l" style="left:18px;top:71px;transform:scaleX(0.868)">Gehört zu Ber.:</div>
<div class="l" style="left:18px;top:97px">Reaktionstyp:</div>
<div class="l" style="left:18px;top:123px;transform:scaleX(0.862)">Eingangszeit:</div>
<div class="l" style="left:20px;top:150px;transform:scaleX(0.84)">Kommentar:</div>
<div class="sunk" style="left:145px;top:39px;width:139px;height:20px"></div>
<div class="l" style="left:149px;top:44px">BM Windfang</div>
<div class="a" style="left:213px;top:42px;width:1px;height:13px;background:#000"></div>
<div class="sunk" style="left:145px;top:65px;width:139px;height:20px"></div>
<div class="l" style="left:151px;top:69px">1: Haus</div>
<div class="pb" style="left:266px;top:67px;width:17px;height:17px"></div>
<svg class="a" style="left:271px;top:74px" width="7" height="4" viewBox="0 0 7 4"><path shape-rendering="crispEdges" d="M0 0h7v1h-1v1h-1v1h-1v1h-1v-1h-1v-1h-1v-1h-1z" fill="#000"/></svg>
<div class="sunk" style="left:124px;top:91px;width:160px;height:20px"></div>
<div class="l" style="left:130px;top:95px;transform:scaleX(0.906)">0: Eingänge/Ausgänge</div>
<div class="pb" style="left:266px;top:93px;width:17px;height:17px"></div>
<svg class="a" style="left:271px;top:100px" width="7" height="4" viewBox="0 0 7 4"><path shape-rendering="crispEdges" d="M0 0h7v1h-1v1h-1v1h-1v1h-1v-1h-1v-1h-1v-1h-1z" fill="#000"/></svg>
<div class="sunk" style="left:212px;top:117px;width:51px;height:21px"></div>
<div class="l" style="left:216px;top:121px">20</div>
<div class="pb" style="left:246px;top:119px;width:15px;height:8px"></div>
<div class="pb" style="left:246px;top:127px;width:15px;height:9px"></div>
<svg class="a" style="left:250px;top:121px" width="7" height="4" viewBox="0 0 7 4"><polygon points="0,4 7,4 3.5,0" fill="#000"/></svg>
<svg class="a" style="left:250px;top:129px" width="7" height="4" viewBox="0 0 7 4"><polygon points="0,0 7,0 3.5,4" fill="#000"/></svg>
<div class="l" style="left:266px;top:122px">sek.</div>
<div class="sunk" style="left:76px;top:145px;width:516px;height:19px"></div>
<div class="l" style="left:79px;top:148px;transform:scaleX(0.947)">711126</div>
<div class="l" style="left:330px;top:45px;transform:scaleX(0.865)">Linientyp:</div>
<div class="l" style="left:330px;top:71px;transform:scaleX(0.836)">Sensibilität:</div>
<div class="l" style="left:330px;top:98px;transform:scaleX(0.862)">Max. Verletzungszeit:</div>
<div class="l" style="left:330px;top:123px;transform:scaleX(0.88)">Max. Zeit ohne Verletz.:</div>
<div class="sunk" style="left:420px;top:40px;width:117px;height:19px"></div>
<div class="l" style="left:426px;top:44px;transform:scaleX(0.915)">4: 2EOL/NC</div>
<div class="pb" style="left:519px;top:42px;width:17px;height:16px"></div>
<svg class="a" style="left:524px;top:49px" width="7" height="4" viewBox="0 0 7 4"><path shape-rendering="crispEdges" d="M0 0h7v1h-1v1h-1v1h-1v1h-1v-1h-1v-1h-1v-1h-1z" fill="#000"/></svg>
<div class="sunk" style="left:450px;top:65px;width:51px;height:20px"></div>
<div class="l" style="left:454px;top:69px">320</div>
<div class="pb" style="left:484px;top:67px;width:15px;height:8px"></div>
<div class="pb" style="left:484px;top:75px;width:15px;height:8px"></div>
<svg class="a" style="left:488px;top:69px" width="7" height="4" viewBox="0 0 7 4"><polygon points="0,4 7,4 3.5,0" fill="#000"/></svg>
<svg class="a" style="left:488px;top:77px" width="7" height="4" viewBox="0 0 7 4"><polygon points="0,0 7,0 3.5,4" fill="#000"/></svg>
<div class="l" style="left:504px;top:70px">ms.</div>
<div class="sunk" style="left:451px;top:90px;width:50px;height:21px"></div>
<div class="l" style="left:455px;top:94px">0</div>
<div class="pb" style="left:484px;top:92px;width:15px;height:8px"></div>
<div class="pb" style="left:484px;top:100px;width:15px;height:9px"></div>
<svg class="a" style="left:488px;top:94px" width="7" height="4" viewBox="0 0 7 4"><polygon points="0,4 7,4 3.5,0" fill="#000"/></svg>
<svg class="a" style="left:488px;top:102px" width="7" height="4" viewBox="0 0 7 4"><polygon points="0,0 7,0 3.5,4" fill="#000"/></svg>
<div class="l" style="left:507px;top:96px">sek.</div>
<div class="sunk" style="left:451px;top:116px;width:50px;height:20px"></div>
<div class="l" style="left:455px;top:120px">0</div>
<div class="pb" style="left:484px;top:118px;width:15px;height:8px"></div>
<div class="pb" style="left:484px;top:126px;width:15px;height:8px"></div>
<svg class="a" style="left:488px;top:120px" width="7" height="4" viewBox="0 0 7 4"><polygon points="0,4 7,4 3.5,0" fill="#000"/></svg>
<svg class="a" style="left:488px;top:128px" width="7" height="4" viewBox="0 0 7 4"><polygon points="0,0 7,0 3.5,4" fill="#000"/></svg>
<svg class="a" style="left:507px;top:113px" width="12" height="12" viewBox="0 0 12 12"><circle cx="6" cy="6" r="5.5" fill="#fff"/><path d="M10 2A5.5 5.5 0 1 0 2 10" stroke="#a0a0a0" fill="none"/><path d="M9.2 2.8A4.5 4.5 0 1 0 2.8 9.2" stroke="#696969" stroke-width=".9" fill="none"/><path d="M2 10A5.5 5.5 0 1 0 10 2" stroke="#fff" fill="none"/><circle cx="6" cy="6" r="2" fill="#000"/></svg>
<div class="l" style="left:524px;top:113px">Stunden</div>
<svg class="a" style="left:507px;top:128px" width="12" height="12" viewBox="0 0 12 12"><circle cx="6" cy="6" r="5.5" fill="#fff"/><path d="M10 2A5.5 5.5 0 1 0 2 10" stroke="#a0a0a0" fill="none"/><path d="M9.2 2.8A4.5 4.5 0 1 0 2.8 9.2" stroke="#696969" stroke-width=".9" fill="none"/><path d="M2 10A5.5 5.5 0 1 0 10 2" stroke="#fff" fill="none"/></svg>
<div class="l" style="left:524px;top:129px">min.</div>
<div class="bev" style="left:6px;top:177px;width:593px;height:113px"></div>
<div class="l" style="left:13px;top:173px;background:#f0f0f0;padding:0 1px">Optionen</div>
<div class="cb" style="left:11px;top:189px"></div>
<div class="l" style="left:29px;top:189px">Kein Alarm nach Str.V.</div>
<div class="cb" style="left:11px;top:205px"></div>
<div class="l" style="left:29px;top:205px">Zwangspriorität</div>
<div class="cb" style="left:11px;top:221px"></div>
<div class="l" style="left:29px;top:221px">Steuert Video bei Unscharf</div>
<div class="cb" style="left:11px;top:237px"></div>
<div class="l" style="left:29px;top:237px">Steuert Video bei Scharf</div>
<div class="cb" style="left:11px;top:253px"></div>
<div class="l" style="left:29px;top:253px;transform:scaleX(0.876)">Benutzer sperrt nicht</div>
<div class="cb" style="left:11px;top:269px"></div>
<div class="l" style="left:29px;top:269px;transform:scaleX(0.88)">Bei Nichtverl. des Objekts sperren</div>
<div class="cb" style="left:209px;top:189px"></div>
<svg class="a" style="left:212px;top:192px" width="7" height="7" viewBox="0 0 7 7"><path shape-rendering="crispEdges" d="M0 2h1v1h1v1h1v-1h1v-1h1v-1h1v-1h1v3h-1v1h-1v1h-1v1h-1v1h-1v-1h-1v-1h-1z" fill="#000"/></svg>
<div class="l" style="left:227px;top:189px;transform:scaleX(0.883)">Automatische Sperrung nach 3 Al.</div>
<div class="cb" style="left:209px;top:205px"></div>
<div class="l" style="left:227px;top:205px;transform:scaleX(0.883)">Automatische Sperrung nach 1 Al.</div>
<div class="cb" style="left:209px;top:221px"></div>
<div class="l" style="left:227px;top:221px">Autolösch. der Zähler</div>
<div class="cb d" style="left:209px;top:237px"></div>
<div class="l dis" style="left:227px;top:237px">Mit Verifikation</div>
<div class="cb d" style="left:209px;top:253px"></div>
<div class="l dis" style="left:227px;top:253px;transform:scaleX(0.861)">Alarmsignalisierung-Verzögerung</div>
<div class="cb" style="left:209px;top:269px"></div>
<svg class="a" style="left:212px;top:272px" width="7" height="7" viewBox="0 0 7 7"><path shape-rendering="crispEdges" d="M0 2h1v1h1v1h1v-1h1v-1h1v-1h1v-1h1v3h-1v1h-1v1h-1v1h-1v1h-1v-1h-1v-1h-1z" fill="#000"/></svg>
<div class="l" style="left:227px;top:269px">Sperrt die Verifikation</div>
<div class="cb" style="left:407px;top:184px"></div>
<svg class="a" style="left:410px;top:187px" width="7" height="7" viewBox="0 0 7 7"><path shape-rendering="crispEdges" d="M0 2h1v1h1v1h1v-1h1v-1h1v-1h1v-1h1v3h-1v1h-1v1h-1v1h-1v1h-1v-1h-1v-1h-1z" fill="#000"/></svg>
<div class="l" style="left:425px;top:184px;transform:scaleX(0.878)">Keine Meld. bei Eingangszeit</div>
<div class="cb" style="left:407px;top:199px"></div>
<div class="l" style="left:425px;top:199px;transform:scaleX(0.903)">Rückcode nach Alarmende</div>
<div class="cb" style="left:407px;top:214px"></div>
<div class="l" style="left:425px;top:214px;transform:scaleX(0.911)">Rückcode nach Unscharfschaltung</div>
<div class="cb" style="left:407px;top:229px"></div>
<svg class="a" style="left:410px;top:232px" width="7" height="7" viewBox="0 0 7 7"><path shape-rendering="crispEdges" d="M0 2h1v1h1v1h1v-1h1v-1h1v-1h1v-1h1v3h-1v1h-1v1h-1v1h-1v1h-1v-1h-1v-1h-1z" fill="#000"/></svg>
<div class="l" style="left:425px;top:229px;transform:scaleX(0.876)">Alarm nach Ausgangszeit</div>
<div class="cb" style="left:407px;top:244px"></div>
<svg class="a" style="left:410px;top:247px" width="7" height="7" viewBox="0 0 7 7"><path shape-rendering="crispEdges" d="M0 2h1v1h1v1h1v-1h1v-1h1v-1h1v-1h1v3h-1v1h-1v1h-1v1h-1v1h-1v-1h-1v-1h-1z" fill="#000"/></svg>
<div class="l" style="left:425px;top:244px;transform:scaleX(0.873)">Alarm nach Entsperrung</div>
<div class="cb" style="left:407px;top:259px"></div>
<div class="l" style="left:425px;top:259px;transform:scaleX(0.857)">Sabotagealarm immer laut</div>
<div class="cb" style="left:407px;top:274px"></div>
<div class="l" style="left:425px;top:274px;transform:scaleX(0.868)">GONG im Erw.-Modul</div>
<div class="pb" style="left:71px;top:304px;width:130px;height:26px"></div>
<div class="a" style="left:91px;top:314px;width:16px;height:4px;border-radius:2px;background:linear-gradient(#60d040,#109010)"></div>
<div class="l" style="left:112px;top:312px">Vorherige Linie</div>
<div class="pb" style="left:253px;top:305px;width:80px;height:26px"></div>
<svg class="a" style="left:275px;top:310px" width="18" height="16" viewBox="0 0 18 16"><path d="M1 9L4 7L7 11L15 1L17 2.5L7.5 15L5.5 15Z" fill="#18a018" stroke="#0a600a" stroke-width=".8"/></svg>
<div class="l" style="left:297px;top:313px">OK</div>
<div class="pb" style="left:379px;top:305px;width:130px;height:26px"></div>
<div class="l" style="left:401px;top:313px">Nächste Linie</div>
<svg class="a" style="left:472px;top:311px" width="14" height="14" viewBox="0 0 14 14"><path d="M5.5 0.5h3v5h5v3h-5v5h-3v-5h-5v-3h5z" fill="#18a818" stroke="#086808" stroke-width=".9"/></svg>
</div>
</div></body></html>
